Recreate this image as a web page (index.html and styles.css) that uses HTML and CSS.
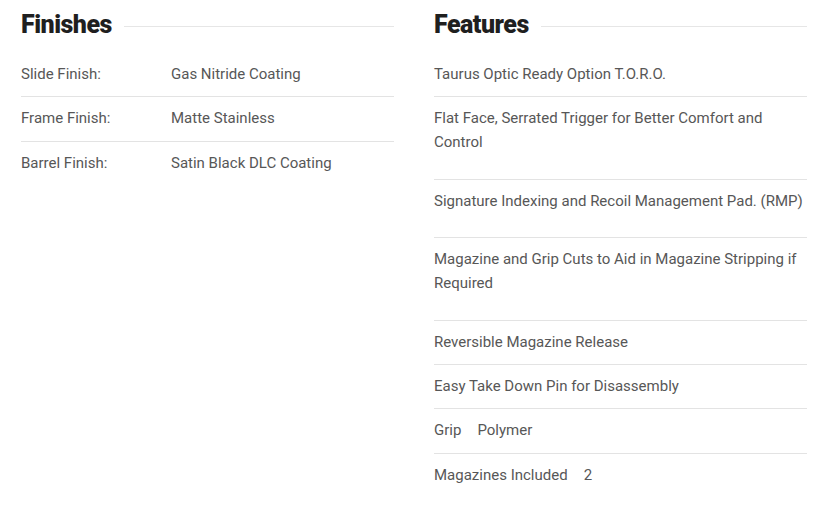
FILE: index.html
```html
<!DOCTYPE html>
<html>
<head>
<meta charset="utf-8">
<link rel="stylesheet" href="styles.css">
</head>
<body>
<div class="specs">
  <section class="col">
    <h2 class="col-title"><span>Finishes</span></h2>
    <div class="row spec"><span class="spec-label">Slide Finish:</span><span class="spec-value">Gas Nitride Coating</span></div>
    <div class="row spec"><span class="spec-label">Frame Finish:</span><span class="spec-value">Matte Stainless</span></div>
    <div class="row spec"><span class="spec-label">Barrel Finish:</span><span class="spec-value">Satin Black DLC Coating</span></div>
  </section>
  <section class="col">
    <h2 class="col-title"><span>Features</span></h2>
    <div class="row">Taurus Optic Ready Option T.O.R.O.</div>
    <div class="row row-spaced">Flat Face, Serrated Trigger for Better Comfort and Control</div>
    <div class="row row-spaced">Signature Indexing and Recoil Management Pad. (RMP)</div>
    <div class="row row-spaced">Magazine and Grip Cuts to Aid in Magazine Stripping if Required</div>
    <div class="row">Reversible Magazine Release</div>
    <div class="row">Easy Take Down Pin for Disassembly</div>
    <div class="row"><span class="pair-label">Grip</span><span>Polymer</span></div>
    <div class="row"><span class="pair-label">Magazines Included</span><span>2</span></div>
  </section>
</div>
</body>
</html>
```

FILE: styles.css
```css
html, body {
  margin: 0;
  padding: 0;
  background: #ffffff;
}
body {
  font-family: Roboto, "Liberation Sans", sans-serif;
  color: #575757;
  font-size: 15px;
}
.specs {
  display: grid;
  grid-template-columns: 373px 373px;
  column-gap: 40px;
  padding: 10px 27px 0 21px;
}
.col-title {
  display: flex;
  align-items: center;
  gap: 12px;
  margin: 0 0 13px 0;
  font-size: 25px;
  line-height: 30px;
  font-weight: 900;
  color: #1f1f1f;
  letter-spacing: -0.5px;
}
.col-title::after {
  content: "";
  flex: 1;
  height: 1px;
  background: #e6e6e6;
  margin-top: 2px;
}
.row {
  padding: 10px 0 9.8px 0;
  line-height: 23.5px;
  border-top: 1px solid #e3e3e3;
}
.col-title + .row {
  border-top: none;
}
.row-spaced {
  padding-bottom: 24.3px;
}
.spec {
  display: flex;
}
.spec-label {
  width: 150px;
  flex: none;
}
.pair-label {
  margin-right: 16px;
}
```
